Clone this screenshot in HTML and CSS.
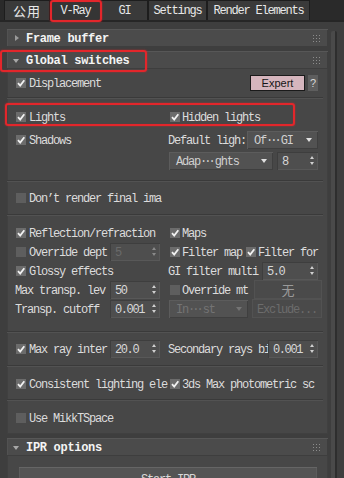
FILE: index.html
```html
<!DOCTYPE html>
<html>
<head>
<meta charset="utf-8">
<link rel="stylesheet" href="styles.css">
</head>
<body>
<div class="tabs">
  <div class="tab t1 cjk">公用</div>
  <div class="tab t2 active">V-Ray</div>
  <div class="tab t3">GI</div>
  <div class="tab t4">Settings</div>
  <div class="tab t5">Render Elements</div>
</div>
<div class="main">
  <div class="col">
    <div class="rollout closed">
      <div class="rhead"><span class="tri-r"></span><span class="htxt">Frame buffer</span><svg class="grip" width="7" height="7" viewBox="0 0 7 7"><g fill="#8c8c8c"><rect x="0" y="0" width="1" height="1"/><rect x="3" y="0" width="1" height="1"/><rect x="6" y="0" width="1" height="1"/><rect x="0" y="3" width="1" height="1"/><rect x="3" y="3" width="1" height="1"/><rect x="6" y="3" width="1" height="1"/><rect x="0" y="6" width="1" height="1"/><rect x="3" y="6" width="1" height="1"/><rect x="6" y="6" width="1" height="1"/></g></svg></div>
    </div>
    <div class="rollout gs">
      <div class="rhead"><span class="tri-d"></span><span class="htxt">Global switches</span><svg class="grip" width="7" height="7" viewBox="0 0 7 7"><g fill="#8c8c8c"><rect x="0" y="0" width="1" height="1"/><rect x="3" y="0" width="1" height="1"/><rect x="6" y="0" width="1" height="1"/><rect x="0" y="3" width="1" height="1"/><rect x="3" y="3" width="1" height="1"/><rect x="6" y="3" width="1" height="1"/><rect x="0" y="6" width="1" height="1"/><rect x="3" y="6" width="1" height="1"/><rect x="6" y="6" width="1" height="1"/></g></svg></div>

      <div class="grp ga">
        <div class="row h18">
          <div class="l"><span class="cb on"><svg viewBox="0 0 10 10"><path d="M2 5.2 L4.2 7.6 L8.3 2.2" /></svg></span><span class="lab">Displacement</span></div>
          <div class="r"><span class="expert">Expert</span><span class="help">?</span></div>
        </div>
      </div>
      <div class="sep"></div>

      <div class="grp gb">
        <div class="row h20">
          <div class="l"><span class="cb on"><svg viewBox="0 0 10 10"><path d="M2 5.2 L4.2 7.6 L8.3 2.2" /></svg></span><span class="lab">Lights</span></div>
          <div class="r"><span class="cb on rc"><svg viewBox="0 0 10 10"><path d="M2 5.2 L4.2 7.6 L8.3 2.2" /></svg></span><span class="lab">Hidden lights</span></div>
        </div>
        <div class="row h20 mt3">
          <div class="l"><span class="cb on"><svg viewBox="0 0 10 10"><path d="M2 5.2 L4.2 7.6 L8.3 2.2" /></svg></span><span class="lab">Shadows</span></div>
          <div class="r"><span class="lab">Default ligh:</span><span class="dd w71"><span class="ddt">Of<span class="ell">···</span>GI</span><span class="arr"></span></span></div>
        </div>
        <div class="row h20 mt1">
          <div class="l"></div>
          <div class="r"><span class="dd w104 ml1"><span class="ddt">Adap<span class="ell">···</span>ghts</span><span class="arr"></span></span><span class="sp w41"><span class="spt">8</span><span class="ud"><i class="u"></i><i class="d"></i></span></span></div>
        </div>
      </div>
      <div class="sep"></div>

      <div class="grp gc">
        <div class="row h18">
          <div class="l wide"><span class="cb"></span><span class="lab">Don’t render final ima</span></div>
        </div>
      </div>
      <div class="sep"></div>

      <div class="grp gd">
        <div class="row h19">
          <div class="l"><span class="cb on"><svg viewBox="0 0 10 10"><path d="M2 5.2 L4.2 7.6 L8.3 2.2" /></svg></span><span class="lab">Reflection/refraction</span></div>
          <div class="r"><span class="cb on rc"><svg viewBox="0 0 10 10"><path d="M2 5.2 L4.2 7.6 L8.3 2.2" /></svg></span><span class="lab">Maps</span></div>
        </div>
        <div class="row h19">
          <div class="l"><span class="cb"></span><span class="lab">Override dept</span><span class="sp w50 dis"><span class="spt">5</span><span class="ud"><i class="u"></i><i class="d"></i></span></span></div>
          <div class="r"><span class="cb on rc"><svg viewBox="0 0 10 10"><path d="M2 5.2 L4.2 7.6 L8.3 2.2" /></svg></span><span class="lab">Filter map</span><span class="cb on ff"><svg viewBox="0 0 10 10"><path d="M2 5.2 L4.2 7.6 L8.3 2.2" /></svg></span><span class="lab">Filter for</span></div>
        </div>
        <div class="row h19">
          <div class="l"><span class="cb on"><svg viewBox="0 0 10 10"><path d="M2 5.2 L4.2 7.6 L8.3 2.2" /></svg></span><span class="lab">Glossy effects</span></div>
          <div class="r"><span class="lab">GI filter multi</span><span class="sp w56"><span class="spt">5.0</span><span class="ud"><i class="u"></i><i class="d"></i></span></span></div>
        </div>
        <div class="row h19">
          <div class="l nocb"><span class="lab">Max transp. lev</span><span class="sp w50"><span class="spt">50</span><span class="ud"><i class="u"></i><i class="d"></i></span></span></div>
          <div class="r"><span class="cb rc"></span><span class="lab">Override mt</span><span class="btn b68 cjk">无</span></div>
        </div>
        <div class="row h19">
          <div class="l nocb"><span class="lab">Transp. cutoff</span><span class="sp w50"><span class="spt">0.001</span><span class="ud"><i class="u"></i><i class="d"></i></span></span></div>
          <div class="r"><span class="dd w79 ml1 dis"><span class="ddt">In<span class="ell">···</span>st</span><span class="arr"></span></span><span class="btn b70 dis">Exclude...</span></div>
        </div>
      </div>
      <div class="sep"></div>

      <div class="grp ge">
        <div class="row h18">
          <div class="l"><span class="cb on"><svg viewBox="0 0 10 10"><path d="M2 5.2 L4.2 7.6 L8.3 2.2" /></svg></span><span class="lab">Max ray inter</span><span class="sp w50"><span class="spt">20.0</span><span class="ud"><i class="u"></i><i class="d"></i></span></span></div>
          <div class="r"><span class="lab sec">Secondary rays bi</span><span class="sp w50"><span class="spt">0.001</span><span class="ud"><i class="u"></i><i class="d"></i></span></span></div>
        </div>
      </div>
      <div class="sep"></div>

      <div class="grp gf">
        <div class="row h18">
          <div class="l"><span class="cb on"><svg viewBox="0 0 10 10"><path d="M2 5.2 L4.2 7.6 L8.3 2.2" /></svg></span><span class="lab">Consistent lighting ele</span></div>
          <div class="r"><span class="cb on rc"><svg viewBox="0 0 10 10"><path d="M2 5.2 L4.2 7.6 L8.3 2.2" /></svg></span><span class="lab">3ds Max photometric sc</span></div>
        </div>
      </div>
      <div class="sep"></div>

      <div class="grp gg">
        <div class="row h18">
          <div class="l"><span class="cb"></span><span class="lab">Use MikkTSpace</span></div>
        </div>
      </div>
    </div>

    <div class="rollout ipr">
      <div class="rhead"><span class="tri-d"></span><span class="htxt">IPR options</span><svg class="grip" width="7" height="7" viewBox="0 0 7 7"><g fill="#8c8c8c"><rect x="0" y="0" width="1" height="1"/><rect x="3" y="0" width="1" height="1"/><rect x="6" y="0" width="1" height="1"/><rect x="0" y="3" width="1" height="1"/><rect x="3" y="3" width="1" height="1"/><rect x="6" y="3" width="1" height="1"/><rect x="0" y="6" width="1" height="1"/><rect x="3" y="6" width="1" height="1"/><rect x="6" y="6" width="1" height="1"/></g></svg></div>
      <div class="iprbody"><div class="bigbtn">Start IPR</div></div>
    </div>
  </div>
  <div class="sb"></div>
</div>

<div class="ann a1"></div>
<div class="ann a2"></div>
<div class="ann a3"></div>
</body>
</html>
```

FILE: styles.css
```css
* { box-sizing: border-box; margin: 0; padding: 0; }
html, body { width: 344px; height: 478px; overflow: hidden; }
body {
  position: relative;
  background: #3e3e3e;
  font-family: "Liberation Mono", "DejaVu Sans Mono", monospace;
  font-size: 12px;
  letter-spacing: -1.2px;
  color: #dcdcdc;
  line-height: 1;
}
.cjk { font-family: "Noto Sans CJK SC", "Liberation Sans", sans-serif; letter-spacing: 0; }

/* tabs */
.tabs {
  display: flex;
  height: 22px;
  padding-left: 4px;
  background: #2a2a2a;
  border-bottom: 2px solid #262626;
}
.tab {
  height: 20px;
  display: flex;
  align-items: center;
  justify-content: center;
  background: #3a3a3a;
  border: 1px solid #1d1d1d;
  border-bottom: none;
  color: #e8e8e8;
}
.tab.cjk { font-size: 13px; letter-spacing: 1px; }
.tab.active { background: #353535; }
.t1 { width: 46px; }
.t2 { width: 51px; }
.t3 { width: 47px; }
.t4 { width: 59px; }
.t5 { width: 103px; }

/* main */
.main { display: flex; padding-top: 7px; height: 456px; overflow: hidden; }
.col { width: 321px; margin-left: 7px; display: flex; flex-direction: column; gap: 4px; }
.sb {
  width: 6px;
  margin-left: 3px;
  margin-top: 2px;
  background: #4a4a4a;
  border-right: 2px solid #2e2e2e;
  border-radius: 2px 2px 0 0;
}

.rollout { background: #474747; box-shadow: inset 0 0 0 1px #404040; flex-shrink: 0; }
.rollout.closed { background: transparent; box-shadow: none; }
.rhead {
  height: 18px;
  display: flex;
  align-items: center;
  background: #4b4b4b;
  box-shadow: inset 0 1px 0 #575757, inset 0 -1px 0 #3e3e3e, inset 1px 0 0 #525252, inset -1px 0 0 #3e3e3e;
  position: relative;
}
.htxt {
  margin-left: 19px;
  padding-top: 2px;
  font-weight: bold;
  color: #f4f4f4;
  letter-spacing: -0.3px;
}
.tri-r {
  position: absolute; left: 8px; top: 6px;
  width: 0; height: 0;
  border-left: 4px solid #9a9a9a;
  border-top: 3px solid transparent;
  border-bottom: 3px solid transparent;
}
.tri-d {
  position: absolute; left: 6px; top: 8px;
  width: 0; height: 0;
  border-top: 4px solid #a8a8a8;
  border-left: 3px solid transparent;
  border-right: 3px solid transparent;
}
.grip { position: absolute; right: 8px; top: 6px; }

/* groups */
.grp { display: flex; flex-direction: column; }
.ga { padding: 5px 0 5px; }
.gb { padding: 8px 0 9px; }
.gc { padding: 7px 0 7px; }
.gd { padding: 7px 0 13px; }
.ge { padding: 7px 0 7px; }
.gf { padding: 8px 0 6px; }
.gg { padding: 8px 0 7px; }
.sep {
  height: 2px;
  margin-right: 5px;
  background: #3a3a3a;
  border-bottom: 1px solid #525252;
}
.row { display: flex; align-items: center; }
.h18 { height: 18px; }
.h19 { height: 19px; }
.h20 { height: 20px; }
.mt3 { margin-top: 3px; }
.mt1 { margin-top: 1px; }

.l {
  width: 161px;
  height: 100%;
  padding: 0 8px 0 9px;
  display: flex;
  align-items: center;
  flex-shrink: 0;
}
.l.nocb { padding-left: 8px; }
.l.wide { width: 300px; }
.r {
  flex: 1;
  height: 100%;
  padding-right: 10px;
  display: flex;
  align-items: center;
  min-width: 0;
}
.lab { white-space: nowrap; padding-top: 2px; }

.cb {
  width: 10px; height: 10px;
  margin-right: 3px;
  background: #5e5e5e;
  flex-shrink: 0;
  display: block;
}
.cb.on { background: #6c6c6c; }
.cb svg { width: 10px; height: 10px; display: block; }
.cb path { fill: none; stroke: #f2f2f2; stroke-width: 1.8; }
.cb.rc { margin-left: 2px; margin-right: 2px; }
.cb.ff { margin-left: 4px; margin-right: 2px; }

.expert {
  margin-left: auto;
  width: 55px; height: 16px;
  background: #d5b5bd;
  border: 1px solid #1a1a1a;
  font-family: "Liberation Sans", sans-serif;
  font-size: 11px;
  letter-spacing: 0;
  color: #151515;
  display: flex; align-items: center; justify-content: center;
}
.help {
  margin-left: 3px;
  width: 10px; height: 16px;
  background: #5e5e5e;
  color: #d8d8d8;
  font-family: "Liberation Sans", sans-serif;
  font-size: 11px;
  letter-spacing: 0;
  display: flex; align-items: center; justify-content: center;
}

/* dropdown */
.dd {
  height: 18px;
  background: #525252;
  box-shadow: inset 1px 1px 0 #5c5c5c, inset -1px -1px 0 #3f3f3f;
  display: flex;
  align-items: center;
  position: relative;
  color: #d0d0d0;
  flex-shrink: 0;
}
.w71 { width: 71px; margin-left: auto; }
.w104 { width: 104px; }
.w79 { width: 79px; }
.ml1 { margin-left: 1px; }
.ddt { margin-left: 7px; white-space: nowrap; padding-top: 2px; }
.ell { letter-spacing: -3px; margin-right: 2px; }
.arr {
  position: absolute; right: 6px; top: 7px;
  width: 0; height: 0;
  border-top: 4px solid #e0e0e0;
  border-left: 3px solid transparent;
  border-right: 3px solid transparent;
}
.dd.dis { color: #747474; }
.dd.dis .arr { border-top-color: #747474; }

/* spinner */
.sp {
  height: 18px;
  margin-left: auto;
  background: #4e4e4e;
  box-shadow: inset 1px 1px 0 #3e3e3e, inset -1px -1px 0 #585858;
  display: flex; align-items: center;
  position: relative;
  color: #d8d8d8;
  flex-shrink: 0;
}
.w50 { width: 50px; }
.w41 { width: 41px; }
.w56 { width: 56px; }
.spt { margin-left: 5px; white-space: nowrap; letter-spacing: -1.4px; padding-top: 2px; }
.ud { position: absolute; right: 3px; top: 4px; width: 5px; height: 10px; }
.ud i { position: absolute; left: 0; width: 0; height: 0; border-left: 2.5px solid transparent; border-right: 2.5px solid transparent; }
.ud .u { top: 0; border-bottom: 3px solid #d0d0d0; }
.ud .d { top: 6px; border-top: 3px solid #d0d0d0; }
.sp.dis { color: #6a6a6a; }
.sp.dis .ud .u { border-bottom-color: #8a8a8a; }
.sp.dis .ud .d { border-top-color: #8a8a8a; }

.sec { width: 100px; overflow: visible; flex-shrink: 0; }

.btn {
  height: 19px;
  margin-left: auto;
  margin-right: -4px;
  background: #4a4a4a;
  box-shadow: inset 0 0 0 1px #525252;
  display: flex; align-items: center; justify-content: center;
  color: #9a9a9a;
  flex-shrink: 0;
}
.b68 { width: 68px; font-size: 13px; }
.b70 { width: 70px; padding-top: 2px; }
.btn.dis { color: #6c6c6c; }

.iprbody { padding: 11px 11px 0 12px; height: 60px; }
.bigbtn {
  height: 24px;
  background: #545454;
  box-shadow: inset 0 1px 0 #656565, inset 0 0 0 1px #5c5c5c;
  display: flex; align-items: flex-start; justify-content: center;
  color: #d8d8d8;
  padding-top: 7px;
}

/* annotation highlight boxes */
.ann {
  position: absolute;
  border: 2px solid #e3262b;
  border-radius: 3px;
  box-shadow: 0 0 2px rgba(227, 38, 43, 0.7), inset 0 0 1px rgba(227, 38, 43, 0.6);
}
.a1 { left: 50px; top: 0; width: 52px; height: 22px; }
.a2 { left: 0; top: 50px; width: 147px; height: 22px; }
.a3 { left: 5px; top: 103px; width: 290px; height: 23px; }
```
